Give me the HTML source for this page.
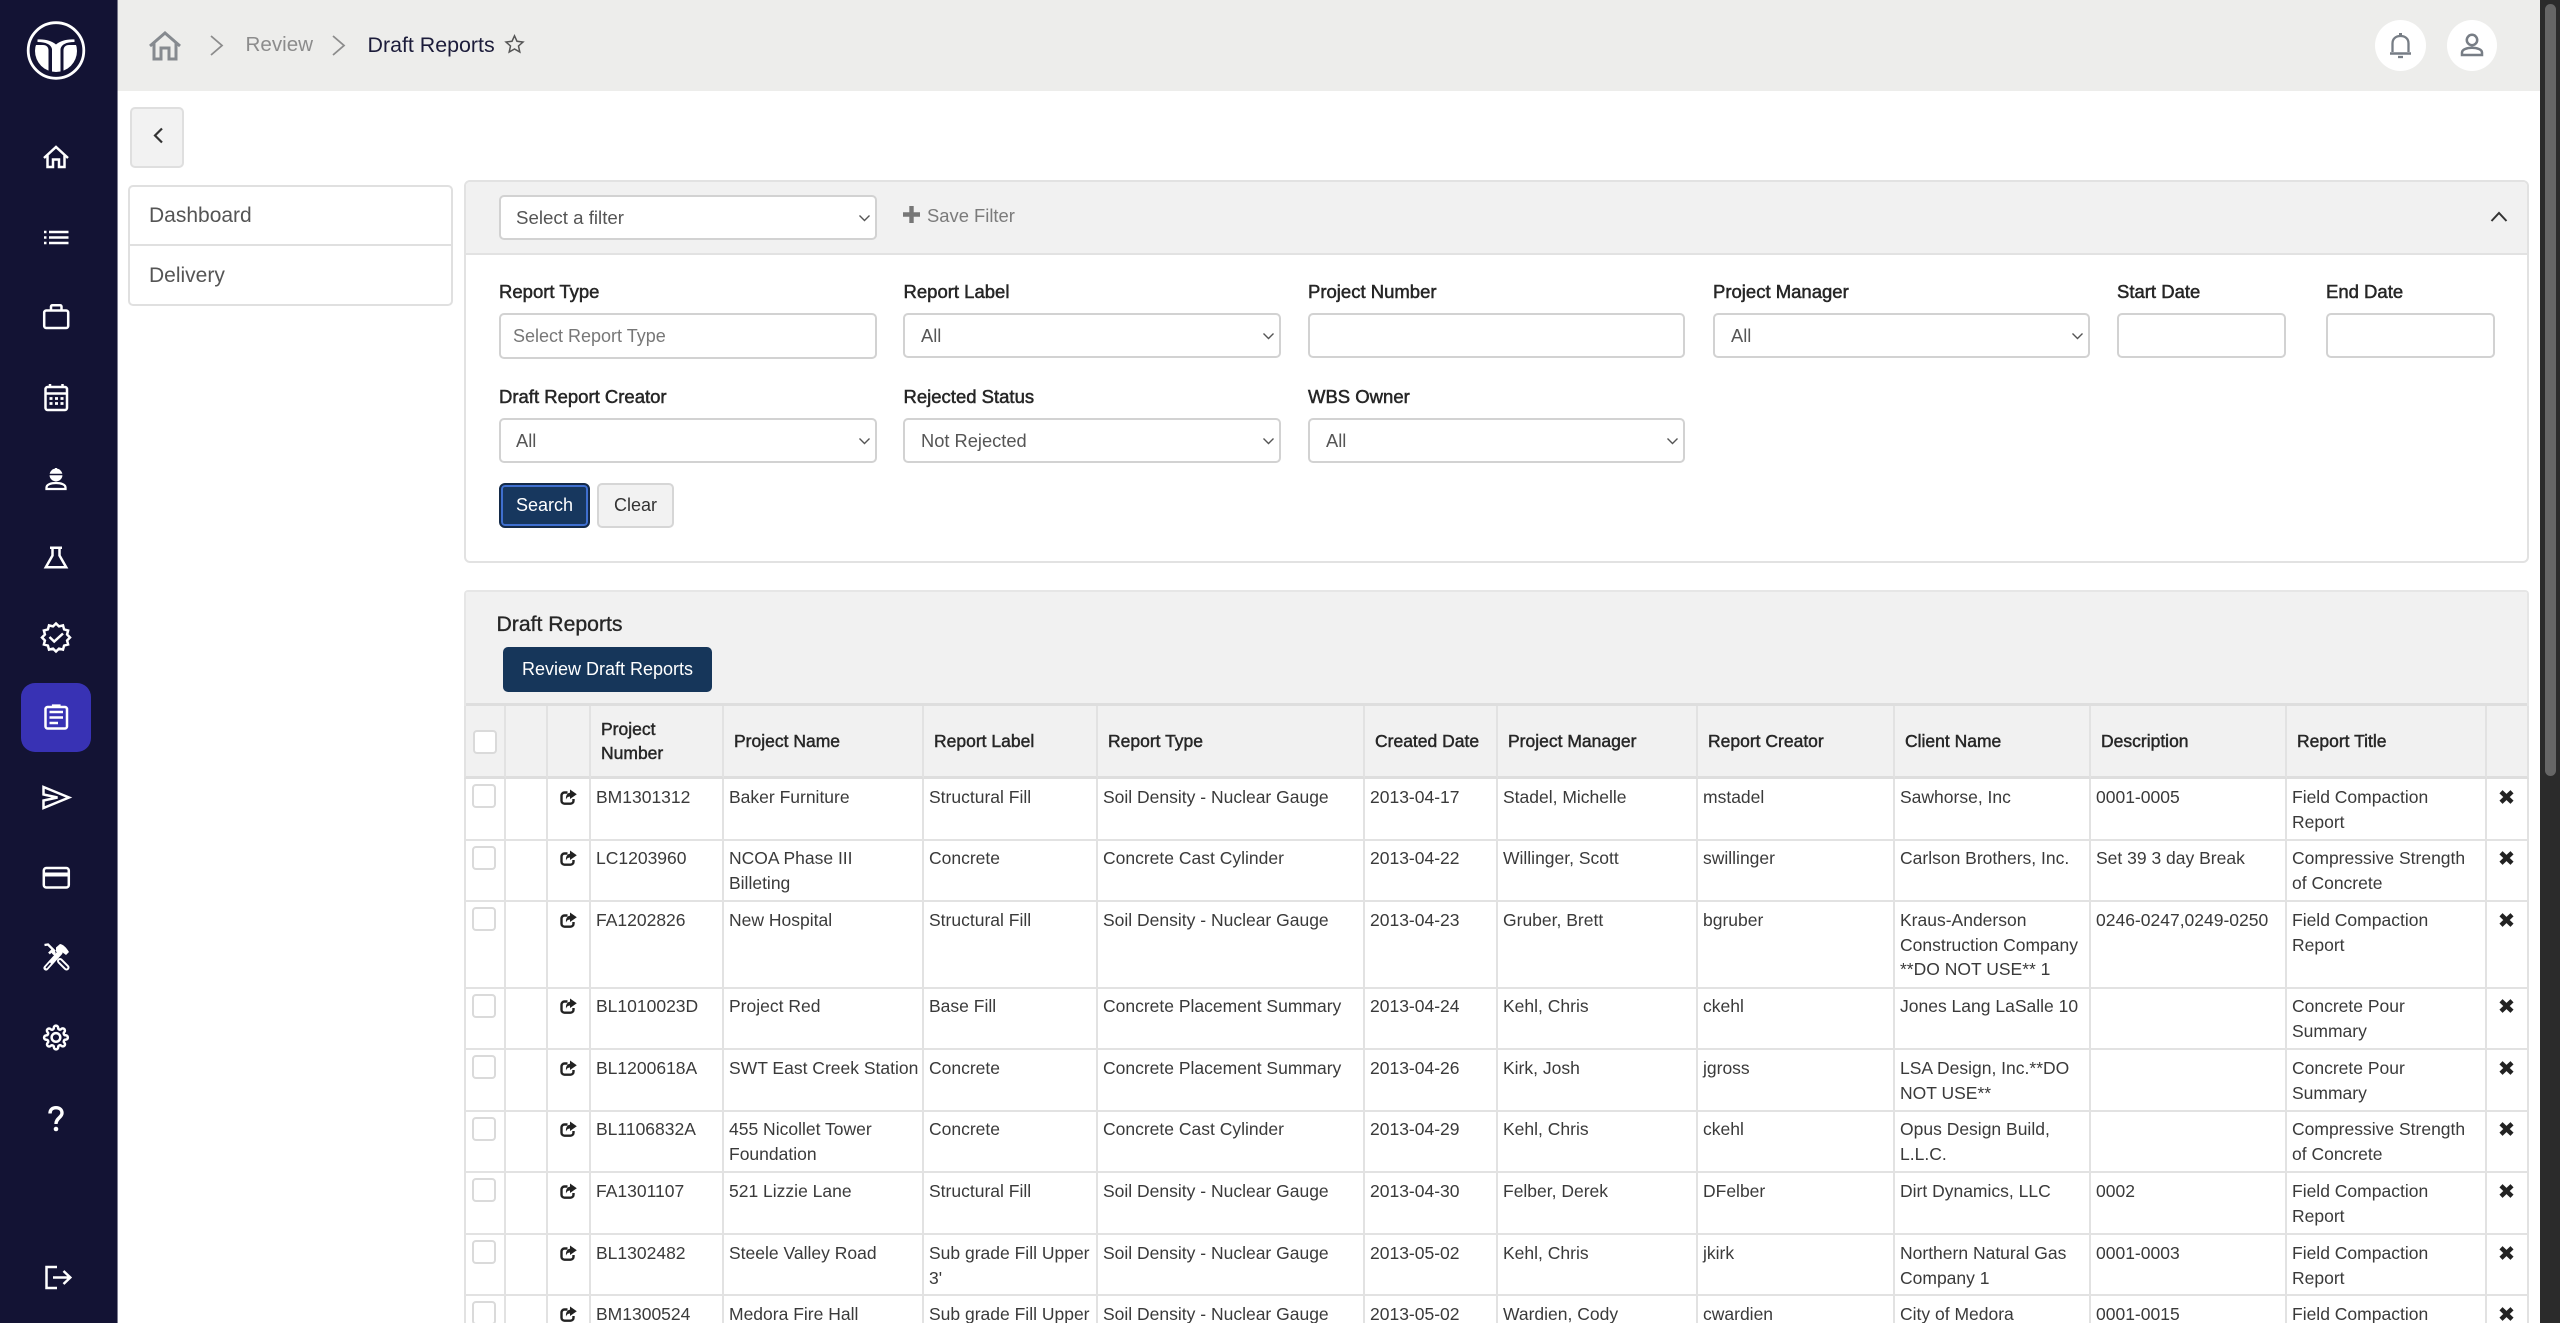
<!DOCTYPE html>
<html lang="en">
<head>
<meta charset="utf-8">
<title>Draft Reports</title>
<style>
html,body{margin:0;padding:0;width:2560px;height:1323px;overflow:hidden;background:#fff;font-family:"Liberation Sans",Arial,sans-serif;color:#3a3a3a}
*{box-sizing:border-box}
#root{position:relative;width:2560px;height:1323px;overflow:hidden;background:#fff}
.a{position:absolute}
.t{position:absolute;white-space:nowrap}
.lb{position:absolute;white-space:nowrap;font-size:18.5px;line-height:24px;color:#262626;-webkit-text-stroke:.5px #262626}
.inp{position:absolute;background:#fff;border:2px solid #d2d2d2;border-radius:5px;font-size:18.3px;color:#555;padding-left:15px;white-space:nowrap}
.inp svg{position:absolute;right:4px;top:50%;margin-top:-4px}
table{position:absolute;left:464px;top:706px;border-collapse:separate;border-spacing:0;table-layout:fixed;width:2065px;font-size:17.5px;line-height:24.5px;color:#3a3a3a;background:#fff}
th{background:#f1f1f1;font-weight:400;color:#262626;-webkit-text-stroke:.45px #262626;text-align:left;vertical-align:middle;padding:0 0 0 10px;border-right:2px solid #e2e2e2;border-bottom:3px solid #dedede;white-space:nowrap}
td{vertical-align:top;padding:6px 0 0 5px;border-right:2px solid #e2e2e2;border-bottom:2px solid #e2e2e2;white-space:nowrap;overflow:hidden}
tr.u td{padding-top:5px}
tr>*:first-child{border-left:2px solid #e2e2e2}
.cb{width:24px;height:24px;border:2px solid #dadada;border-radius:4px;background:#fff;display:block}
td.c1,tr.u td.c1{padding:5px 0 0 6px}
th.c1{padding:2px 0 0 7px}
td.c3{padding:10px 0 0 12px}
tr.u td.c3{padding:9px 0 0 12px}
td.cx{padding:11px 0 0 12px}
tr.u td.cx{padding:10px 0 0 12px}
tr.l td{border-bottom:0;height:27px}
.cl{height:21px;overflow:hidden}
svg{display:block}
</style>
</head>
<body>
<div id="root">

<!-- header -->
<div class="a" style="left:117px;top:0;width:2423px;height:91px;background:#ededeb"></div>
<svg class="a" style="left:148px;top:30px" width="34" height="31" viewBox="0 0 34 31" fill="none" stroke="#868a8f" stroke-width="3"><path d="M2 16 L17 3 L32 16"/><path d="M6 13 V29 H13 V18 H21 V29 H28 V13"/></svg>
<svg class="a" style="left:208px;top:33px" width="17" height="25" viewBox="0 0 17 25" fill="none" stroke="#8c8c8c" stroke-width="1.8"><path d="M3 3 L14 12.5 L3 22"/></svg>
<div class="t" style="left:245.500px;top:33px;font-size:20.600px;line-height:24px;color:#8c8c8c">Review</div>
<svg class="a" style="left:330px;top:33px" width="17" height="25" viewBox="0 0 17 25" fill="none" stroke="#8c8c8c" stroke-width="1.8"><path d="M3 3 L14 12.5 L3 22"/></svg>
<div class="t" style="left:367.500px;top:33px;font-size:21.400px;line-height:24px;color:#1c1c3a">Draft Reports</div>
<svg class="a" style="left:504px;top:34px" width="21" height="20" viewBox="0 0 21 20" fill="none" stroke="#555" stroke-width="1.5"><path d="M10.500 1.800 L13 7.300 L19 8 L14.500 12 L15.800 18 L10.500 15 L5.200 18 L6.500 12 L2 8 L8 7.300 Z"/></svg>

<div class="a" style="left:2375px;top:20px;width:51px;height:51px;border-radius:50%;background:#fff"></div>
<svg class="a" style="left:2375px;top:20px" width="51" height="51" viewBox="0 0 51 51" fill="none" stroke="#777d85" stroke-width="2.300"><path d="M17.500 32 V23.500 C17.500 18.500 21 16 25.500 16 C30 16 33.500 18.500 33.500 23.500 V32"/><path d="M15 33.500 H36" stroke-width="2.600"/><path d="M25.500 13 V16" stroke-width="3"/><path d="M23 37 H28" stroke-width="2.300"/></svg>
<div class="a" style="left:2447px;top:20px;width:50px;height:51px;border-radius:50%;background:#fff"></div>
<svg class="a" style="left:2447px;top:20px" width="50" height="51" viewBox="0 0 50 51" fill="none" stroke="#777d85" stroke-width="2.500"><circle cx="25" cy="20" r="5.200"/><path d="M15 35 V32.500 C15 29.500 20 27.700 25 27.700 C30 27.700 35 29.500 35 32.500 V35 Z"/></svg>

<!-- scrollbar -->
<div class="a" style="left:2540px;top:0;width:20px;height:1323px;background:#2b2b2b"></div>
<div class="a" style="left:2545px;top:4px;width:11px;height:772px;background:#666;border-radius:6px"></div>

<!-- sidebar -->
<div class="a" style="left:0;top:0;width:117px;height:1323px;background:#131334;box-shadow:1px 0 0 rgba(19,19,52,.55)"></div>
<div class="a" style="left:21px;top:683px;width:70px;height:69px;background:#3832b4;border-radius:14px"></div>
<svg class="a" style="left:0;top:0" width="118" height="1323" viewBox="0 0 118 1323" fill="none" stroke="#fff" stroke-width="2.500">
  <!-- logo -->
  <circle cx="56" cy="50.500" r="27.800" stroke-width="2.800"/>
  <clipPath id="lc"><circle cx="56" cy="51" r="21"/></clipPath>
  <g clip-path="url(#lc)" fill="#fff" stroke="none">
    <path d="M33 45 H43 C46.500 45 48.500 47 48.500 50.500 V74 H33 Z"/>
    <path d="M79 45 H69 C65.500 45 63.500 47 63.500 50.500 V74 H79 Z"/>
    <rect x="52" y="48" width="8.500" height="25"/>
  </g>
  <path d="M37.500 39.500 C45 39 52 41 56 44.500 C60 41 67 39 74.500 39.500 L74.500 42 C66 42 61.500 44.500 60.500 49 H52 C51 44.500 46 42 37.500 42 Z" fill="#fff" stroke="none"/>
  <!-- home -->
  <path d="M44 158 L56 147 L68 158"/><path d="M47.500 155.500 V167 H53 V159.500 H59 V167 H64.500 V155.500"/>
  <!-- list -->
  <path d="M44 232 H46.500 M49 232 H68.500 M44 237.500 H46.500 M49 237.500 H68.500 M44 243 H46.500 M49 243 H68.500"/>
  <!-- briefcase -->
  <rect x="44.200" y="310.500" width="24" height="17.500" rx="2"/><path d="M51 310 V306.500 A1.500 1.500 0 0 1 52.500 305.200 H60 A1.500 1.500 0 0 1 61.500 306.500 V310"/>
  <!-- calendar -->
  <rect x="45.500" y="387" width="21.500" height="23" rx="2"/><path d="M45.500 393.500 H67 M50 384 V388 M62.500 384 V388"/>
  <path d="M49.500 398.500 H52.500 M55 398.500 H58 M60.500 398.500 H63.500 M49.500 403.500 H52.500 M55 403.500 H58 M60.500 403.500 H63.500" stroke-width="2.800"/>
  <!-- worker -->
  <circle cx="56" cy="475" r="5.200" fill="#fff"/><path d="M56 468 V471" stroke-width="2"/><path d="M49.500 474.500 H62.500" stroke-width="1.500" stroke="#131334"/><path d="M46.500 489 V487.500 C46.500 484.500 51 483 56 483 C61 483 65.500 484.500 65.500 487.500 V489 Z" stroke-width="2.300"/>
  <!-- flask -->
  <path d="M50 547.800 H62 M52.500 548 V555.500 L45.800 567.300 H66.200 L59.500 555.500 V548"/>
  <!-- badge -->
  <polygon transform="translate(56 637.500)" points="14,0 11.100,3 12.100,7 8.100,8.100 7,12.100 3,11.100 0,14 -3,11.100 -7,12.100 -8.100,8.100 -12.100,7 -11.100,3 -14,0 -11.100,-3 -12.100,-7 -8.100,-8.100 -7,-12.100 -3,-11.100 0,-14 3,-11.100 7,-12.100 8.100,-8.100 12.100,-7 11.100,-3"/>
  <path d="M49.500 637 L54.200 641.500 L63 633.500"/>
  <!-- clipboard -->
  <rect x="45.500" y="707" width="21.500" height="21.500" rx="2"/><path d="M53 707 V705.500 H59.500 V707" stroke-width="2.200"/><path d="M49.500 712 H63 M49.500 717.500 H63 M49.500 723 H58"/>
  <!-- send -->
  <path d="M43.500 787 L69 797.500 L43.500 808 V800.500 L57.500 797.500 L43.500 794.500 Z"/>
  <!-- card -->
  <rect x="43.800" y="868" width="25" height="19.500" rx="2.500"/><path d="M44 874.500 H69" stroke-width="4"/>
  <!-- tools -->
  <path d="M44.500 945 L48 944.500 L55 951.500 M55 951.500 L52.500 954" stroke-width="2.300"/>
  <path d="M49 953.500 L51.500 951 L56.500 956"/>
  <path d="M60 961 L66.500 967.500" stroke-width="6" stroke-linecap="round"/><path d="M60 961 L66.500 967.500" stroke-width="2" stroke="#131334" stroke-linecap="round"/>
  <path d="M46 968 L60 952.500" stroke-width="5.200" stroke-linecap="round"/><path d="M46.500 967.500 L50 963.500" stroke-width="1.600" stroke="#131334" stroke-linecap="round"/>
  <path d="M56 947.500 L60 944 C63 944.500 66 947 69 952 L66 955 L62 952 L60 954.500 L56 951.500 Z" fill="#fff" stroke="none"/>
  <!-- gear -->
  <g transform="translate(43 1024.500) scale(1.080)" stroke-width="2.300"><circle cx="12" cy="12" r="4"/><path d="M19.400 15a1.650 1.650 0 0 0 .33 1.820l.06.06a2 2 0 0 1 0 2.830 2 2 0 0 1-2.830 0l-.06-.06a1.650 1.650 0 0 0-1.820-.33 1.650 1.650 0 0 0-1 1.510V21a2 2 0 0 1-2 2 2 2 0 0 1-2-2v-.09A1.650 1.650 0 0 0 9 19.400a1.650 1.650 0 0 0-1.820.33l-.06.06a2 2 0 0 1-2.830 0 2 2 0 0 1 0-2.830l.06-.06a1.650 1.650 0 0 0 .33-1.820 1.650 1.650 0 0 0-1.510-1H3a2 2 0 0 1-2-2 2 2 0 0 1 2-2h.09A1.650 1.650 0 0 0 4.600 9a1.650 1.650 0 0 0-.33-1.820l-.06-.06a2 2 0 0 1 0-2.830 2 2 0 0 1 2.830 0l.06.06a1.650 1.650 0 0 0 1.820.33H9a1.650 1.650 0 0 0 1-1.510V3a2 2 0 0 1 2-2 2 2 0 0 1 2 2v.09a1.650 1.650 0 0 0 1 1.510 1.650 1.650 0 0 0 1.820-.33l.06-.06a2 2 0 0 1 2.830 0 2 2 0 0 1 0 2.830l-.06.06a1.650 1.650 0 0 0-.33 1.820V9a1.650 1.650 0 0 0 1.510 1H21a2 2 0 0 1 2 2 2 2 0 0 1-2 2h-.09a1.650 1.650 0 0 0-1.510 1z"/></g>
  <!-- question -->
  <path d="M50 1113.500 C50 1109.500 52.500 1107.700 56 1107.700 C59.800 1107.700 62 1110 62 1113 C62 1117.500 56 1118 56 1124" stroke-width="3.400"/><circle cx="56" cy="1129" r="2.300" fill="#fff" stroke="none"/>
  <!-- logout -->
  <path d="M57 1267 H46.500 V1288 H57"/><path d="M53 1277.500 H70 M63.500 1271 L70.300 1277.500 L63.500 1284"/>
</svg>

<!-- back button -->
<div class="a" style="left:130px;top:107px;width:54px;height:61px;background:#f2f2f2;border:2px solid #dfdfdf;border-radius:5px"></div>
<svg class="a" style="left:151px;top:126px" width="14" height="19" viewBox="0 0 14 19" fill="none" stroke="#333" stroke-width="2.200"><path d="M11 2.500 L4 9.500 L11 16.500"/></svg>

<!-- left list -->
<div class="a" style="left:128px;top:185px;width:325px;height:121px;border:2px solid #e0e0e0;border-radius:5px;background:#fff"></div>
<div class="a" style="left:128px;top:244px;width:325px;height:2px;background:#e0e0e0"></div>
<div class="t" style="left:149px;top:204px;font-size:21px;line-height:24px;color:#555">Dashboard</div>
<div class="t" style="left:149px;top:264px;font-size:21px;line-height:24px;color:#555">Delivery</div>

<!-- filter panel -->
<div class="a" style="left:464px;top:180px;width:2065px;height:383px;border:2px solid #e2e2e2;border-radius:6px;background:#fff;overflow:hidden">
  <div style="height:73px;background:#f1f1f1;border-bottom:2px solid #e2e2e2"></div>
</div>
<div class="inp" style="left:499px;top:195px;width:378px;height:45px;line-height:41px;font-size:18.700px">Select a filter<svg width="13" height="8" viewBox="0 0 13 8" fill="none" stroke="#555" stroke-width="1.400"><path d="M1.500 1.500 L6.500 6.500 L11.500 1.500"/></svg></div>
<svg class="a" style="left:903px;top:206px" width="17" height="17" viewBox="0 0 17 17"><path d="M6.300 0 H10.700 V6.300 H17 V10.700 H10.700 V17 H6.300 V10.700 H0 V6.300 H6.300 Z" fill="#777"/></svg>
<div class="t" style="left:927px;top:204px;font-size:18.400px;line-height:24px;color:#7b7b7b">Save Filter</div>
<svg class="a" style="left:2490px;top:210px" width="18" height="13" viewBox="0 0 18 13" fill="none" stroke="#333" stroke-width="2"><path d="M1.500 11 L9 3 L16.500 11"/></svg>

<div class="lb" style="left:499px;top:280px">Report Type</div>
<div class="lb" style="left:903.500px;top:280px">Report Label</div>
<div class="lb" style="left:1308px;top:280px">Project Number</div>
<div class="lb" style="left:1713px;top:280px">Project Manager</div>
<div class="lb" style="left:2117px;top:280px">Start Date</div>
<div class="lb" style="left:2326px;top:280px">End Date</div>

<div class="inp" style="left:499px;top:313px;width:378px;height:46px;line-height:42px;padding-left:12px;font-size:18px;color:#777">Select Report Type</div>
<div class="inp" style="left:903px;top:313px;width:378px;height:45px;line-height:41px;padding-left:16px">All<svg width="13" height="8" viewBox="0 0 13 8" fill="none" stroke="#555" stroke-width="1.400"><path d="M1.500 1.500 L6.500 6.500 L11.500 1.500"/></svg></div>
<div class="inp" style="left:1308px;top:313px;width:377px;height:45px"></div>
<div class="inp" style="left:1713px;top:313px;width:377px;height:45px;line-height:41px;padding-left:16px">All<svg width="13" height="8" viewBox="0 0 13 8" fill="none" stroke="#555" stroke-width="1.400"><path d="M1.500 1.500 L6.500 6.500 L11.500 1.500"/></svg></div>
<div class="inp" style="left:2117px;top:313px;width:169px;height:45px"></div>
<div class="inp" style="left:2326px;top:313px;width:169px;height:45px"></div>

<div class="lb" style="left:499px;top:385px">Draft Report Creator</div>
<div class="lb" style="left:903.500px;top:385px">Rejected Status</div>
<div class="lb" style="left:1308px;top:385px">WBS Owner</div>

<div class="inp" style="left:499px;top:418px;width:378px;height:45px;line-height:41px">All<svg width="13" height="8" viewBox="0 0 13 8" fill="none" stroke="#555" stroke-width="1.400"><path d="M1.500 1.500 L6.500 6.500 L11.500 1.500"/></svg></div>
<div class="inp" style="left:903px;top:418px;width:378px;height:45px;line-height:41px;padding-left:16px">Not Rejected<svg width="13" height="8" viewBox="0 0 13 8" fill="none" stroke="#555" stroke-width="1.400"><path d="M1.500 1.500 L6.500 6.500 L11.500 1.500"/></svg></div>
<div class="inp" style="left:1308px;top:418px;width:377px;height:45px;line-height:41px;padding-left:16px">All<svg width="13" height="8" viewBox="0 0 13 8" fill="none" stroke="#555" stroke-width="1.400"><path d="M1.500 1.500 L6.500 6.500 L11.500 1.500"/></svg></div>

<div class="a" style="left:499px;top:483px;width:91px;height:45px;border-radius:6px;background:#17375e;border:2px solid #142a48;box-shadow:inset 0 0 0 2px #3f6fcf;color:#fff;font-size:18px;line-height:41px;text-align:center">Search</div>
<div class="a" style="left:597px;top:483px;width:77px;height:45px;border-radius:5px;background:#f2f2f2;border:2px solid #d6d6d6;color:#333;font-size:18px;line-height:41px;text-align:center">Clear</div>

<!-- draft reports panel -->
<div class="a" style="left:464px;top:590px;width:2065px;height:733px;border:2px solid #e6e6e6;border-bottom:0;border-radius:4px 4px 0 0;background:#fff;overflow:hidden">
  <div style="height:114px;background:#f1f1f1;border-bottom:3px solid #dedede"></div>
</div>
<div class="t" style="left:496.500px;top:612px;font-size:21.200px;line-height:26px;color:#262626;-webkit-text-stroke:.35px #262626">Draft Reports</div>
<div class="a" style="left:503px;top:647px;width:209px;height:45px;border-radius:5px;background:#16365a;color:#fff;font-size:18px;line-height:45px;text-align:center">Review Draft Reports</div>

<svg width="0" height="0" style="position:absolute">
  <symbol id="sh" viewBox="0 0 17 16"><path d="M7.500 3.500 H4.500 A3 3 0 0 0 1.500 6.500 V11.700 A3 3 0 0 0 4.500 14.700 H10.500 A3 3 0 0 0 13.500 11.700 V10" fill="none" stroke="#222" stroke-width="2.400"/><path d="M10 0.500 L16.800 5.300 L10 10 V7.500 C8 7.500 6.700 8.500 6 10.500 C5.500 6.500 7.500 3.800 10 3.800 Z" fill="#222"/></symbol>
  <symbol id="xx" viewBox="0 0 15 14"><path d="M2 1.800 L13 12.200 M13 1.800 L2 12.200" fill="none" stroke="#222" stroke-width="4.500"/></symbol>
</svg>

<table>
<colgroup><col style="width:42px"><col style="width:42px"><col style="width:43px"><col style="width:133px"><col style="width:200px"><col style="width:174px"><col style="width:267px"><col style="width:133px"><col style="width:200px"><col style="width:197px"><col style="width:196px"><col style="width:196px"><col style="width:200px"><col style="width:42px"></colgroup>
<tr style="height:73px"><th class="c1"><span class="cb"></span></th><th></th><th></th><th>Project<br>Number</th><th>Project Name</th><th>Report Label</th><th>Report Type</th><th>Created Date</th><th>Project Manager</th><th>Report Creator</th><th>Client Name</th><th>Description</th><th>Report Title</th><th></th></tr>
<tr style="height:62px"><td class="c1"><span class="cb"></span></td><td></td><td class="c3"><svg width="17" height="16"><use href="#sh"/></svg></td><td>BM1301312</td><td>Baker Furniture</td><td>Structural Fill</td><td>Soil Density - Nuclear Gauge</td><td>2013-04-17</td><td>Stadel, Michelle</td><td>mstadel</td><td>Sawhorse, Inc</td><td>0001-0005</td><td>Field Compaction<br>Report</td><td class="cx"><svg width="15" height="14"><use href="#xx"/></svg></td></tr>
<tr class="u" style="height:61px"><td class="c1"><span class="cb"></span></td><td></td><td class="c3"><svg width="17" height="16"><use href="#sh"/></svg></td><td>LC1203960</td><td>NCOA Phase III<br>Billeting</td><td>Concrete</td><td>Concrete Cast Cylinder</td><td>2013-04-22</td><td>Willinger, Scott</td><td>swillinger</td><td>Carlson Brothers, Inc.</td><td>Set 39 3 day Break</td><td>Compressive Strength<br>of Concrete</td><td class="cx"><svg width="15" height="14"><use href="#xx"/></svg></td></tr>
<tr style="height:87px"><td class="c1"><span class="cb"></span></td><td></td><td class="c3"><svg width="17" height="16"><use href="#sh"/></svg></td><td>FA1202826</td><td>New Hospital</td><td>Structural Fill</td><td>Soil Density - Nuclear Gauge</td><td>2013-04-23</td><td>Gruber, Brett</td><td>bgruber</td><td>Kraus-Anderson<br>Construction Company<br>**DO NOT USE** 1</td><td>0246-0247,0249-0250</td><td>Field Compaction<br>Report</td><td class="cx"><svg width="15" height="14"><use href="#xx"/></svg></td></tr>
<tr class="u" style="height:61px"><td class="c1"><span class="cb"></span></td><td></td><td class="c3"><svg width="17" height="16"><use href="#sh"/></svg></td><td>BL1010023D</td><td>Project Red</td><td>Base Fill</td><td>Concrete Placement Summary</td><td>2013-04-24</td><td>Kehl, Chris</td><td>ckehl</td><td>Jones Lang LaSalle 10</td><td></td><td>Concrete Pour<br>Summary</td><td class="cx"><svg width="15" height="14"><use href="#xx"/></svg></td></tr>
<tr style="height:62px"><td class="c1"><span class="cb"></span></td><td></td><td class="c3"><svg width="17" height="16"><use href="#sh"/></svg></td><td>BL1200618A</td><td>SWT East Creek Station</td><td>Concrete</td><td>Concrete Placement Summary</td><td>2013-04-26</td><td>Kirk, Josh</td><td>jgross</td><td>LSA Design, Inc.**DO<br>NOT USE**</td><td></td><td>Concrete Pour<br>Summary</td><td class="cx"><svg width="15" height="14"><use href="#xx"/></svg></td></tr>
<tr class="u" style="height:61px"><td class="c1"><span class="cb"></span></td><td></td><td class="c3"><svg width="17" height="16"><use href="#sh"/></svg></td><td>BL1106832A</td><td>455 Nicollet Tower<br>Foundation</td><td>Concrete</td><td>Concrete Cast Cylinder</td><td>2013-04-29</td><td>Kehl, Chris</td><td>ckehl</td><td>Opus Design Build,<br>L.L.C.</td><td></td><td>Compressive Strength<br>of Concrete</td><td class="cx"><svg width="15" height="14"><use href="#xx"/></svg></td></tr>
<tr style="height:62px"><td class="c1"><span class="cb"></span></td><td></td><td class="c3"><svg width="17" height="16"><use href="#sh"/></svg></td><td>FA1301107</td><td>521 Lizzie Lane</td><td>Structural Fill</td><td>Soil Density - Nuclear Gauge</td><td>2013-04-30</td><td>Felber, Derek</td><td>DFelber</td><td>Dirt Dynamics, LLC</td><td>0002</td><td>Field Compaction<br>Report</td><td class="cx"><svg width="15" height="14"><use href="#xx"/></svg></td></tr>
<tr style="height:61px"><td class="c1"><span class="cb"></span></td><td></td><td class="c3"><svg width="17" height="16"><use href="#sh"/></svg></td><td>BL1302482</td><td>Steele Valley Road</td><td>Sub grade Fill Upper<br>3'</td><td>Soil Density - Nuclear Gauge</td><td>2013-05-02</td><td>Kehl, Chris</td><td>jkirk</td><td>Northern Natural Gas<br>Company 1</td><td>0001-0003</td><td>Field Compaction<br>Report</td><td class="cx"><svg width="15" height="14"><use href="#xx"/></svg></td></tr>
<tr class="l" style="height:27px"><td class="c1"><div class="cl" style="height:22px"><span class="cb"></span></div></td><td></td><td class="c3"><svg width="17" height="16"><use href="#sh"/></svg></td><td><div class="cl">BM1300524</div></td><td><div class="cl">Medora Fire Hall</div></td><td><div class="cl">Sub grade Fill Upper</div></td><td><div class="cl">Soil Density - Nuclear Gauge</div></td><td><div class="cl">2013-05-02</div></td><td><div class="cl">Wardien, Cody</div></td><td><div class="cl">cwardien</div></td><td><div class="cl">City of Medora</div></td><td><div class="cl">0001-0015</div></td><td><div class="cl">Field Compaction</div></td><td class="cx"><svg width="15" height="14"><use href="#xx"/></svg></td></tr>
</table>

</div>
</body>
</html>
